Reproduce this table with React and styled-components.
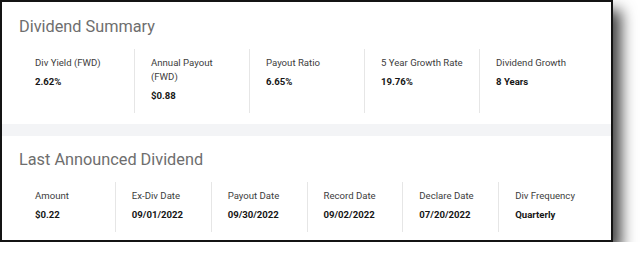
import styled, { createGlobalStyle } from 'styled-components'

const GlobalStyle = createGlobalStyle`
  html, body {
    margin: 0;
    padding: 0;
    background: #ffffff;
  }
  body {
    font-family: Roboto, "Liberation Sans", Arial, sans-serif;
  }
`

const Card = styled.div`
  box-sizing: border-box;
  width: 613px;
  border: 2px solid #141414;
  background: #ffffff;
  box-shadow: 8px 10px 14px rgba(0, 0, 0, 0.75);
`

const Section = styled.section`
  padding: ${props => props.$top}px 17px ${props => props.$bottom}px;
`

const Band = styled.div`
  height: 12px;
  background: #f3f4f6;
`

const Title = styled.h2`
  margin: 0 0 12px;
  font-size: 16.3px;
  line-height: 20px;
  font-weight: 400;
  color: #6e6e6e;
`

const Grid = styled.div`
  display: grid;
  grid-template-columns: repeat(${props => props.$cols}, 1fr);
`

const Cell = styled.div`
  padding: 7px 12px 10px 16px;
  & + & {
    border-left: 1px solid #e6e6e6;
  }
`

const Label = styled.div`
  font-size: 9.6px;
  line-height: 14px;
  color: #3d3d3d;
`

const Value = styled.div`
  margin-top: 5px;
  font-size: 9.6px;
  line-height: 14px;
  font-weight: 700;
  color: #161616;
`

const summary = [
  { label: 'Div Yield (FWD)', value: '2.62%' },
  { label: 'Annual Payout (FWD)', value: '$0.88' },
  { label: 'Payout Ratio', value: '6.65%' },
  { label: '5 Year Growth Rate', value: '19.76%' },
  { label: 'Dividend Growth', value: '8 Years' }
]

const announced = [
  { label: 'Amount', value: '$0.22' },
  { label: 'Ex-Div Date', value: '09/01/2022' },
  { label: 'Payout Date', value: '09/30/2022' },
  { label: 'Record Date', value: '09/02/2022' },
  { label: 'Declare Date', value: '07/20/2022' },
  { label: 'Div Frequency', value: 'Quarterly' }
]

function StatGrid({ items }) {
  return (
    <Grid $cols={items.length}>
      {items.map(item => (
        <Cell key={item.label}>
          <Label>{item.label}</Label>
          <Value>{item.value}</Value>
        </Cell>
      ))}
    </Grid>
  )
}

export default function App() {
  return (
    <>
      <GlobalStyle />
      <Card>
        <Section $top={15} $bottom={11}>
          <Title>Dividend Summary</Title>
          <StatGrid items={summary} />
        </Section>
        <Band />
        <Section $top={14} $bottom={8}>
          <Title>Last Announced Dividend</Title>
          <StatGrid items={announced} />
        </Section>
      </Card>
    </>
  )
}
